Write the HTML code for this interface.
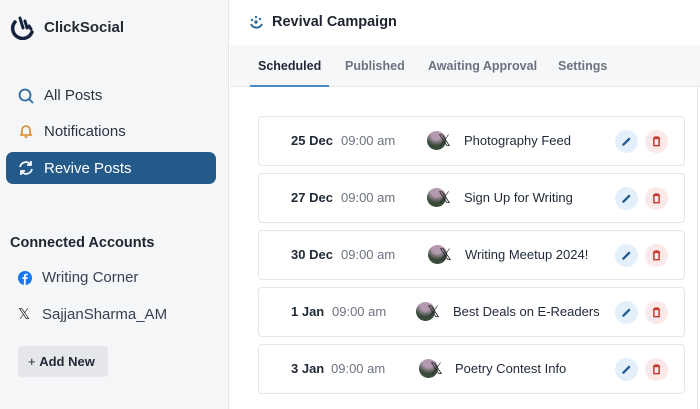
<!DOCTYPE html><html><head><style>
*{box-sizing:border-box;margin:0;padding:0}
body{width:700px;height:409px;overflow:hidden;font-family:"Liberation Sans",sans-serif;background:#fff;position:relative;color:#1f2937}
.sb{position:absolute;left:0;top:0;width:229px;height:409px;background:#f5f6f8;border-right:1px solid #e3e5e8}
.a{position:absolute;white-space:nowrap}
.nav{font-size:15px;color:#2d3340}
.act{position:absolute;left:6px;top:152px;width:210px;height:32px;background:#245a8a;border-radius:7px}
.hd{position:absolute;left:230px;top:0;right:0;height:45px;background:#fff}
.tb{position:absolute;left:230px;top:45px;right:0;height:42px;background:#f6f7f8;border-bottom:1px solid #e5e7eb}
.tab{font-size:12.5px;font-weight:bold;color:#6b7280;top:59px}
.card{position:absolute;left:258px;width:427px;height:50px;border:1px solid #e3e5e8;border-radius:4px;background:#fff}
.d{font-size:13px;font-weight:bold;color:#1f2937}
.t{font-size:13px;color:#6b7280}
.ti{font-size:13px;color:#1f2937}
.av{position:absolute;width:19px;height:19px;border-radius:50%;background:radial-gradient(circle at 50% 15%,#b49ab0 30%,#3a4a3a 62%)}
.x{position:absolute;font-size:16px;color:#222}
.eb{position:absolute;width:23px;height:23px;border-radius:50%;background:#e3f0fb}
.db{position:absolute;width:23px;height:23px;border-radius:50%;background:#fbe9e9}
</style></head><body>
<div class="sb"></div>
<svg class="a" style="left:10px;top:14px" width="26" height="26" viewBox="0 0 26 26"><path d="M5 8 A10 10 0 1 0 22 18" stroke="#15233f" stroke-width="3.5" fill="none" stroke-linecap="round"/><path d="M10 4 L13 14 M15 7 L17 14 M19 12 L21 15" stroke="#15233f" stroke-width="3" stroke-linecap="round"/></svg>
<div class="a" style="left:44px;top:19px;font-size:15px;font-weight:bold;color:#252a33">ClickSocial</div>
<svg class="a" style="left:18px;top:88px" width="16" height="16" viewBox="0 0 16 16"><circle cx="7" cy="7" r="5.5" stroke="#2b6aa0" stroke-width="1.8" fill="none"/><path d="M11 11 L15 15" stroke="#2b6aa0" stroke-width="1.8"/></svg>
<div class="a nav" style="left:44px;top:87px">All Posts</div>
<svg class="a" style="left:18px;top:123px" width="16" height="16" viewBox="0 0 16 16"><path d="M3 12 L4 10 V7 A4 4 0 0 1 12 7 V10 L13 12 Z M6.5 14 H9.5" stroke="#d68a2a" stroke-width="1.6" fill="none"/></svg>
<div class="a nav" style="left:44px;top:123px">Notifications</div>
<div class="act"></div>
<svg class="a" style="left:18px;top:160px" width="16" height="16" viewBox="0 0 16 16"><path d="M2 7 A6 6 0 0 1 13 5 M14 9 A6 6 0 0 1 3 11 M13 1 V5 H9 M3 15 V11 H7" stroke="#fff" stroke-width="1.7" fill="none"/></svg>
<div class="a nav" style="left:44px;top:160px;color:#fff">Revive Posts</div>
<div class="a" style="left:10px;top:235px;font-size:14.5px;font-weight:bold;color:#1f2430">Connected Accounts</div>
<svg class="a" style="left:18px;top:271px" width="14" height="14" viewBox="0 0 14 14"><circle cx="7" cy="7" r="7" fill="#1877f2"/><path d="M7.7 14 V8 H9.4 L9.7 6.2 H7.7 V5.2 C7.7 4.6 8 4.3 8.6 4.3 H9.8 V2.8 C9 2.7 8.5 2.7 8 2.7 C6.7 2.7 5.9 3.5 5.9 4.9 V6.2 H4.4 V8 H5.9 V14 Z" fill="#fff"/></svg>
<div class="a nav" style="left:42px;top:269px;color:#374151">Writing Corner</div>
<div class="a" style="left:18px;top:305px;font-size:15px;color:#222">𝕏</div>
<div class="a nav" style="left:42px;top:306px;color:#374151">SajjanSharma_AM</div>
<div class="a" style="left:18px;top:346px;width:90px;height:31px;background:#e5e7eb;border-radius:4px"></div>
<div class="a" style="left:28px;top:354px;font-size:13px;color:#1f2937"><span style="font-weight:normal">+</span> <b>Add New</b></div>
<div class="hd"></div>
<svg class="a" style="left:249px;top:15px" width="15" height="15" viewBox="0 0 15 15"><path d="M2 9 A6 6 0 0 0 13 9" stroke="#2b6aa0" stroke-width="2" fill="none"/><circle cx="3" cy="5" r="1.2" fill="#2b6aa0"/><circle cx="7" cy="2" r="1.2" fill="#2b6aa0"/><circle cx="11" cy="4" r="1.2" fill="#2b6aa0"/><path d="M7 5 V9 M5 7 H9" stroke="#2b6aa0" stroke-width="1.5"/></svg>
<div class="a" style="left:272px;top:14px;font-size:14.5px;font-weight:bold;color:#1f2430">Revival Campaign</div>
<div class="tb"></div>
<div class="a tab" style="left:258px;color:#1f2937">Scheduled</div>
<div class="a" style="left:250px;top:85px;width:79px;height:2px;background:#4a8ac4"></div>
<div class="a tab" style="left:345px">Published</div>
<div class="a tab" style="left:428px">Awaiting Approval</div>
<div class="a tab" style="left:558px">Settings</div>
<div class="a" style="left:697px;top:87px;width:1px;height:322px;background:#e3e5e8"></div>

<div class="card" style="top:116px"></div>
<div class="card" style="top:173px"></div>
<div class="card" style="top:230px"></div>
<div class="card" style="top:287px"></div>
<div class="card" style="top:344px"></div>

<div class="a d" style="left:291px;top:133px">25 Dec</div><div class="a t" style="left:341px;top:133px">09:00 am</div><div class="av" style="left:427px;top:131px"></div><div class="x" style="left:438px;top:131px">𝕏</div><div class="a ti" style="left:464px;top:133px">Photography Feed</div>
<div class="a d" style="left:291px;top:190px">27 Dec</div><div class="a t" style="left:341px;top:190px">09:00 am</div><div class="av" style="left:427px;top:188px"></div><div class="x" style="left:438px;top:188px">𝕏</div><div class="a ti" style="left:464px;top:190px">Sign Up for Writing</div>
<div class="a d" style="left:291px;top:247px">30 Dec</div><div class="a t" style="left:341px;top:247px">09:00 am</div><div class="av" style="left:428px;top:245px"></div><div class="x" style="left:439px;top:245px">𝕏</div><div class="a ti" style="left:465px;top:247px">Writing Meetup 2024!</div>
<div class="a d" style="left:291px;top:304px">1 Jan</div><div class="a t" style="left:332px;top:304px">09:00 am</div><div class="av" style="left:416px;top:302px"></div><div class="x" style="left:427px;top:302px">𝕏</div><div class="a ti" style="left:453px;top:304px">Best Deals on E-Readers</div>
<div class="a d" style="left:291px;top:361px">3 Jan</div><div class="a t" style="left:331px;top:361px">09:00 am</div><div class="av" style="left:419px;top:359px"></div><div class="x" style="left:430px;top:359px">𝕏</div><div class="a ti" style="left:455px;top:361px">Poetry Contest Info</div>

<div id="btns"></div>
<script>
var tops=[141,198,255,312,369],h='';
tops.forEach(function(c){
h+='<div class="eb" style="left:615px;top:'+(c-11)+'px"><svg width="23" height="23" viewBox="0 0 22 22"><path d="M8 14 L13.5 8.5" stroke="#245a8a" stroke-width="2.2" stroke-linecap="round"/></svg></div>';
h+='<div class="db" style="left:645px;top:'+(c-11)+'px"><svg width="23" height="23" viewBox="0 0 22 22"><path d="M7.5 8 H14.5 M9.5 8 V6.8 H12.5 V8 M8.5 8.5 V15 H13.5 V8.5" stroke="#c0392b" stroke-width="1.4" fill="none"/></svg></div>';
});
document.getElementById('btns').innerHTML=h;
</script>
</body></html>
